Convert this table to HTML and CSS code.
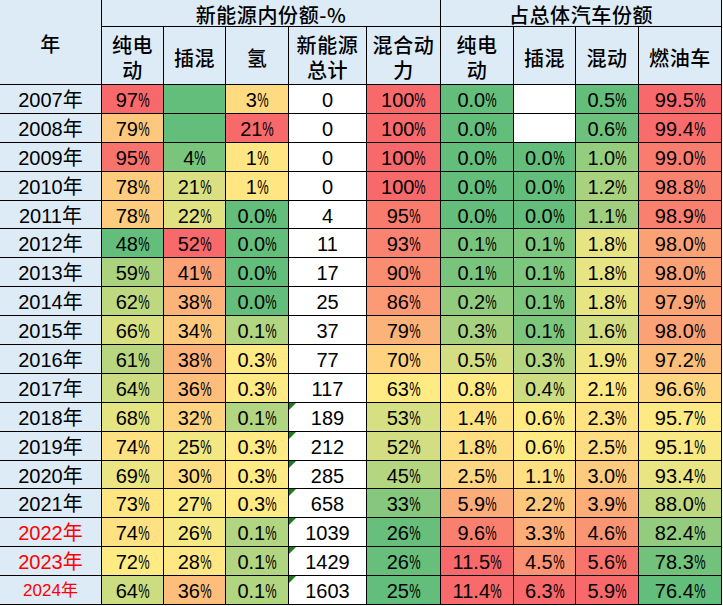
FILE: index.html
```html
<!DOCTYPE html>
<html lang="zh">
<head>
<meta charset="utf-8">
<title>新能源份额</title>
<link rel="stylesheet" href="styles.css">
</head>
<body>
<table class="grid">
  <colgroup>
    <col class="w-year"><col class="w-a"><col class="w-a"><col class="w-b"><col class="w-c"><col class="w-d"><col class="w-e"><col class="w-a"><col class="w-b"><col class="w-f">
  </colgroup>
  <thead>
    <tr class="hr1">
      <th rowspan="2" class="hd">年</th>
      <th colspan="5" class="hd">新能源内份额-%</th>
      <th colspan="4" class="hd">占总体汽车份额</th>
    </tr>
    <tr class="hr2">
      <th class="hd">纯电<br>动</th>
      <th class="hd">插混</th>
      <th class="hd">氢</th>
      <th class="hd">新能源<br>总计</th>
      <th class="hd">混合动<br>力</th>
      <th class="hd">纯电<br>动</th>
      <th class="hd">插混</th>
      <th class="hd">混动</th>
      <th class="hd">燃油车</th>
    </tr>
  </thead>
  <tbody>
    <tr><td class="year">2007年</td><td>97<span class="p">%</span></td><td data-v="0"></td><td>3<span class="p">%</span></td><td class="tot">0</td><td>100<span class="p">%</span></td><td>0.0<span class="p">%</span></td><td></td><td>0.5<span class="p">%</span></td><td>99.5<span class="p">%</span></td></tr>
    <tr><td class="year">2008年</td><td>79<span class="p">%</span></td><td data-v="0"></td><td>21<span class="p">%</span></td><td class="tot">0</td><td>100<span class="p">%</span></td><td>0.0<span class="p">%</span></td><td></td><td>0.6<span class="p">%</span></td><td>99.4<span class="p">%</span></td></tr>
    <tr><td class="year">2009年</td><td>95<span class="p">%</span></td><td>4<span class="p">%</span></td><td>1<span class="p">%</span></td><td class="tot">0</td><td>100<span class="p">%</span></td><td>0.0<span class="p">%</span></td><td>0.0<span class="p">%</span></td><td>1.0<span class="p">%</span></td><td>99.0<span class="p">%</span></td></tr>
    <tr><td class="year">2010年</td><td>78<span class="p">%</span></td><td>21<span class="p">%</span></td><td>1<span class="p">%</span></td><td class="tot">0</td><td>100<span class="p">%</span></td><td>0.0<span class="p">%</span></td><td>0.0<span class="p">%</span></td><td>1.2<span class="p">%</span></td><td>98.8<span class="p">%</span></td></tr>
    <tr><td class="year">2011年</td><td>78<span class="p">%</span></td><td>22<span class="p">%</span></td><td>0.0<span class="p">%</span></td><td class="tot">4</td><td>95<span class="p">%</span></td><td>0.0<span class="p">%</span></td><td>0.0<span class="p">%</span></td><td>1.1<span class="p">%</span></td><td>98.9<span class="p">%</span></td></tr>
    <tr><td class="year">2012年</td><td>48<span class="p">%</span></td><td>52<span class="p">%</span></td><td>0.0<span class="p">%</span></td><td class="tot">11</td><td>93<span class="p">%</span></td><td>0.1<span class="p">%</span></td><td>0.1<span class="p">%</span></td><td>1.8<span class="p">%</span></td><td>98.0<span class="p">%</span></td></tr>
    <tr><td class="year">2013年</td><td>59<span class="p">%</span></td><td>41<span class="p">%</span></td><td>0.0<span class="p">%</span></td><td class="tot">17</td><td>90<span class="p">%</span></td><td>0.1<span class="p">%</span></td><td>0.1<span class="p">%</span></td><td>1.8<span class="p">%</span></td><td>98.0<span class="p">%</span></td></tr>
    <tr><td class="year">2014年</td><td>62<span class="p">%</span></td><td>38<span class="p">%</span></td><td>0.0<span class="p">%</span></td><td class="tot">25</td><td>86<span class="p">%</span></td><td>0.2<span class="p">%</span></td><td>0.1<span class="p">%</span></td><td>1.8<span class="p">%</span></td><td>97.9<span class="p">%</span></td></tr>
    <tr><td class="year">2015年</td><td>66<span class="p">%</span></td><td>34<span class="p">%</span></td><td>0.1<span class="p">%</span></td><td class="tot">37</td><td>79<span class="p">%</span></td><td>0.3<span class="p">%</span></td><td>0.1<span class="p">%</span></td><td>1.6<span class="p">%</span></td><td>98.0<span class="p">%</span></td></tr>
    <tr><td class="year">2016年</td><td>61<span class="p">%</span></td><td>38<span class="p">%</span></td><td>0.3<span class="p">%</span></td><td class="tot">77</td><td>70<span class="p">%</span></td><td>0.5<span class="p">%</span></td><td>0.3<span class="p">%</span></td><td>1.9<span class="p">%</span></td><td>97.2<span class="p">%</span></td></tr>
    <tr><td class="year">2017年</td><td>64<span class="p">%</span></td><td>36<span class="p">%</span></td><td>0.3<span class="p">%</span></td><td class="tot">117</td><td>63<span class="p">%</span></td><td>0.8<span class="p">%</span></td><td>0.4<span class="p">%</span></td><td>2.1<span class="p">%</span></td><td>96.6<span class="p">%</span></td></tr>
    <tr><td class="year">2018年</td><td>68<span class="p">%</span></td><td>32<span class="p">%</span></td><td>0.1<span class="p">%</span></td><td class="tot flag">189</td><td>53<span class="p">%</span></td><td>1.4<span class="p">%</span></td><td>0.6<span class="p">%</span></td><td>2.3<span class="p">%</span></td><td>95.7<span class="p">%</span></td></tr>
    <tr><td class="year">2019年</td><td>74<span class="p">%</span></td><td>25<span class="p">%</span></td><td>0.3<span class="p">%</span></td><td class="tot flag">212</td><td>52<span class="p">%</span></td><td>1.8<span class="p">%</span></td><td>0.6<span class="p">%</span></td><td>2.5<span class="p">%</span></td><td>95.1<span class="p">%</span></td></tr>
    <tr><td class="year">2020年</td><td>69<span class="p">%</span></td><td>30<span class="p">%</span></td><td>0.3<span class="p">%</span></td><td class="tot flag">285</td><td>45<span class="p">%</span></td><td>2.5<span class="p">%</span></td><td>1.1<span class="p">%</span></td><td>3.0<span class="p">%</span></td><td>93.4<span class="p">%</span></td></tr>
    <tr><td class="year">2021年</td><td>73<span class="p">%</span></td><td>27<span class="p">%</span></td><td>0.3<span class="p">%</span></td><td class="tot flag">658</td><td>33<span class="p">%</span></td><td>5.9<span class="p">%</span></td><td>2.2<span class="p">%</span></td><td>3.9<span class="p">%</span></td><td>88.0<span class="p">%</span></td></tr>
    <tr><td class="year red">2022年</td><td>74<span class="p">%</span></td><td>26<span class="p">%</span></td><td>0.1<span class="p">%</span></td><td class="tot flag">1039</td><td>26<span class="p">%</span></td><td>9.6<span class="p">%</span></td><td>3.3<span class="p">%</span></td><td>4.6<span class="p">%</span></td><td>82.4<span class="p">%</span></td></tr>
    <tr><td class="year red">2023年</td><td>72<span class="p">%</span></td><td>28<span class="p">%</span></td><td>0.1<span class="p">%</span></td><td class="tot flag">1429</td><td>26<span class="p">%</span></td><td>11.5<span class="p">%</span></td><td>4.5<span class="p">%</span></td><td>5.6<span class="p">%</span></td><td>78.3<span class="p">%</span></td></tr>
    <tr><td class="year red small">2024年</td><td>64<span class="p">%</span></td><td>36<span class="p">%</span></td><td>0.1<span class="p">%</span></td><td class="tot flag">1603</td><td>25<span class="p">%</span></td><td>11.4<span class="p">%</span></td><td>6.3<span class="p">%</span></td><td>5.9<span class="p">%</span></td><td>76.4<span class="p">%</span></td></tr>
  </tbody>
</table>
<script src="script.js"></script>
</body>
</html>
```

FILE: styles.css
```css
html, body {
  margin: 0;
  padding: 0;
  background: #ffffff;
}

.grid {
  border-collapse: separate;
  border-spacing: 0;
  table-layout: fixed;
  width: 722px;
  font-family: "Liberation Sans", "Noto Sans CJK SC", sans-serif;
  font-size: 20px;
  color: #000000;
}

.w-year { width: 102px; }
.w-a { width: 62px; }
.w-b { width: 63px; }
.w-c { width: 78px; }
.w-d { width: 74px; }
.w-e { width: 73px; }
.w-f { width: 83px; }

.grid th,
.grid td {
  box-sizing: border-box;
  padding: 0;
  border-right: 1px solid #000000;
  border-bottom: 1px solid #000000;
  text-align: center;
  vertical-align: middle;
  white-space: nowrap;
  font-weight: normal;
  overflow: hidden;
}

.grid td {
  line-height: 22px;
  height: 28.9px;
  padding-top: 2px;
}

.hd {
  background: #ddebf7;
  font-family: "Noto Sans CJK SC", sans-serif;
  font-size: 20px;
  font-weight: 500;
  letter-spacing: 0.6px;
  line-height: 25px;
  color: #000000;
}

.grid .hd {
  font-weight: 500;
}

.hr1 .hd {
  height: 27px;
  line-height: 23px;
  padding-top: 2px;
}

.hr2 .hd {
  height: 58px;
  padding-top: 3px;
}

.year {
  background: #ddebf7;
  font-family: "Liberation Sans", "Noto Sans CJK SC", sans-serif;
}

.red { color: #ff0000; }
.small { font-size: 17px; }

.p {
  display: inline-block;
  transform: scaleX(0.64);
  margin: 0 -3.2px;
}

.tot {
  background: #ffffff;
  position: relative;
}

.flag::before {
  content: "";
  position: absolute;
  left: 0;
  top: 0;
  border-top: 7px solid #1a7f1a;
  border-right: 7px solid transparent;
}
```

FILE: script.js
```js
(function () {
  var cfg = {
    1: [48, 72, 97],
    2: [0, 27.5, 52],
    3: [0, 0.2, 21],
    5: [25, 63, 100],
    6: [0, 0.7, 11.5],
    7: [0, 0.6, 6.3],
    8: [0.5, 2.05, 5.9],
    9: [76.4, 96, 99.5]
  };
  var lo = [99, 190, 123], mid = [255, 235, 132], hi = [248, 105, 107];
  function mix(a, b, t) {
    t = Math.max(0, Math.min(1, t));
    return 'rgb(' + a.map(function (v, i) { return Math.round(v + (b[i] - v) * t); }).join(',') + ')';
  }
  var rows = document.querySelectorAll('.grid tbody tr');
  rows.forEach(function (tr) {
    Array.prototype.forEach.call(tr.cells, function (td, i) {
      var c = cfg[i];
      if (!c) return;
      var txt = td.textContent.trim();
      var v = txt === '' ? (td.hasAttribute('data-v') ? parseFloat(td.getAttribute('data-v')) : NaN) : parseFloat(txt);
      if (isNaN(v)) return;
      var col = v <= c[1] ? mix(lo, mid, (v - c[0]) / (c[1] - c[0])) : mix(mid, hi, (v - c[1]) / (c[2] - c[1]));
      td.style.backgroundColor = col;
    });
  });
})();
```
